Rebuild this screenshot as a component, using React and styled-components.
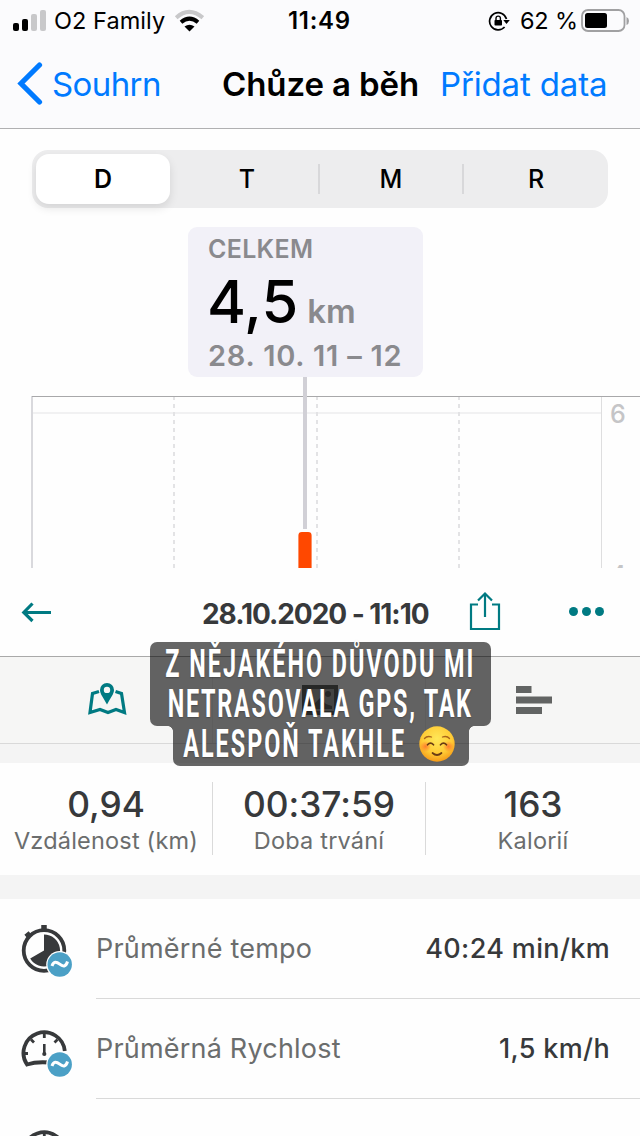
import styled, { createGlobalStyle } from "styled-components";

const stats = [
  { value: "0,94", label: "Vzdálenost (km)" },
  { value: "00:37:59", label: "Doba trvání" },
  { value: "163", label: "Kalorií" },
];

export default function App() {
  return (
    <>
      <GlobalStyle />
      <Screen>
        <HealthHeader>
          <StatusBar>
            <SignalIcon />
            <StatusText $spacing="0.05px">O2 Family</StatusText>
            <WifiIcon />
            <StatusText $bold $spacing="0.7px">
              11:49
            </StatusText>
            <LockIcon />
            <StatusText $spacing="-0.2px">62 %</StatusText>
            <BatteryIcon />
          </StatusBar>
          <NavBar>
            <svg width="52" height="44" viewBox="0 0 52 44">
              <path
                d="M39.5 3 L21 21.5 L39.5 40"
                fill="none"
                stroke="#007aff"
                strokeWidth="5.200"
                strokeLinecap="round"
                strokeLinejoin="miter"
              />
            </svg>
            <NavLink $spacing="-0.6px">Souhrn</NavLink>
            <NavTitle>Chůze a běh</NavTitle>
            <NavLink $spacing="-0.150px">Přidat data</NavLink>
          </NavBar>
        </HealthHeader>

        <HealthBody>
          <Segments>
            <Segment $active>D</Segment>
            <Segment>T</Segment>
            <Segment $divider>M</Segment>
            <Segment $divider>R</Segment>
          </Segments>
          <Summary>
            <SummaryLabel>CELKEM</SummaryLabel>
            <SummaryValue>
              4,5<SummaryUnit>km</SummaryUnit>
            </SummaryValue>
            <SummaryDate>28. 10. 11 – 12</SummaryDate>
          </Summary>
          <Chart />
        </HealthBody>

        <WorkoutHeader>
          <svg width="32" height="22" viewBox="0 0 32 22">
            <path
              d="M30 11.500H3M11.500 2.500L2.800 11.500l8.700 8.500"
              fill="none"
              stroke="#007a82"
              strokeWidth="3.200"
            />
          </svg>
          <WorkoutDate>28.10.2020 - 11:10</WorkoutDate>
          <ShareIcon />
          <Dots>
            <i />
            <i />
            <i />
          </Dots>
        </WorkoutHeader>

        <Tabs>
          <Tab>
            <MapIcon />
          </Tab>
          <Tab>
            <PhotoIcon />
          </Tab>
          <Tab>
            <svg width="38" height="30" viewBox="0 0 38 30">
              <path
                d="M1 1h15.500v7H1zM1 11.500h36v7H1zM1 22h26v7H1z"
                fill="#626463"
              />
            </svg>
          </Tab>
          <Caption>
            <CaptionTop>
              <CaptionLine $spacing="3.3px">Z NĚJAKÉHO DŮVODU MI</CaptionLine>
              <CaptionLine $spacing="2.900px">NETRASOVALA GPS, TAK</CaptionLine>
            </CaptionTop>
            <CaptionBottom>
              <CaptionWord>
                <CaptionLine $spacing="3.300px">ALESPOŇ TAKHLE</CaptionLine>
              </CaptionWord>
              <SmileIcon />
            </CaptionBottom>
          </Caption>
        </Tabs>
        <Band $height={19} />

        <Stats>
          {stats.map((stat) => (
            <Stat key={stat.label}>
              <StatValue>{stat.value}</StatValue>
              <StatLabel>{stat.label}</StatLabel>
            </Stat>
          ))}
        </Stats>
        <Band $height={24} />

        <Row>
          <StopwatchIcon />
          <RowBody>
            <RowLabel>Průměrné tempo</RowLabel>
            <RowValue>40:24 min/km</RowValue>
          </RowBody>
        </Row>
        <Row>
          <GaugeIcon />
          <RowBody>
            <RowLabel>Průměrná Rychlost</RowLabel>
            <RowValue>1,5 km/h</RowValue>
          </RowBody>
        </Row>
        <Row>
          <GaugeIcon />
        </Row>
      </Screen>
    </>
  );
}

function SignalIcon() {
  return (
    <svg width="55" height="40" viewBox="0 0 55 40">
      <rect x="13" y="22" width="6" height="8" rx="2" />
      <rect x="22" y="18" width="6" height="12" rx="2" />
      <rect x="31" y="13" width="6" height="17" rx="2" fill="#c8c8ca" />
      <rect x="40" y="9" width="6" height="21" rx="2" fill="#c8c8ca" />
    </svg>
  );
}

function WifiIcon() {
  return (
    <svg width="30" height="24" viewBox="0 0 30 24">
      <path
        d="M2.200 8.700Q15 -2.800 28.800 8.700"
        fill="none"
        stroke="#c8c8ca"
        strokeWidth="4"
      />
      <path
        d="M7 13.200Q15.500 6 24 13.200"
        fill="none"
        stroke="#000"
        strokeWidth="4"
      />
      <path d="M10.500 17.500Q15.500 14 20.500 17.500L15.500 22.500z" />
    </svg>
  );
}

function LockIcon() {
  return (
    <svg width="22" height="20" viewBox="0 0 22 20">
      <path
        d="M18.500 8A8.600 8.600 0 1 0 16.600 16"
        fill="none"
        stroke="#000"
        strokeWidth="1.700"
      />
      <path d="M15.300 9h6.500l-3.300 4z" />
      <rect x="6.500" y="9" width="7.500" height="5.600" rx="0.800" />
      <path
        d="M8 9V7.300a2.200 2.200 0 0 1 4.400 0V9"
        fill="none"
        stroke="#000"
        strokeWidth="1.400"
      />
    </svg>
  );
}

function BatteryIcon() {
  return (
    <svg width="50" height="24" viewBox="0 0 50 24">
      <rect
        x="1"
        y="1"
        width="42.500"
        height="21"
        rx="6"
        fill="none"
        stroke="#a0a0a2"
        strokeWidth="1.800"
      />
      <rect x="4" y="4" width="22" height="15" rx="2.500" />
      <path d="M45.500 8q2.500 1 2.500 4t-2.500 4z" fill="#a0a0a2" />
    </svg>
  );
}

function Chart() {
  return (
    <ChartSvg width="640" height="191" viewBox="0 377 640 191">
      <path d="M32 413H601" stroke="#f1f1f2" strokeWidth="2" />
      <path
        d="M174 397V568M317 397V568M459 397V568"
        stroke="#e3e3e5"
        strokeWidth="2"
        strokeDasharray="4 4"
        strokeDashoffset="1"
      />
      <path d="M32 396V568" stroke="#d9d9dd" strokeWidth="2" />
      <path d="M601.500 396V568" stroke="#dededf" strokeWidth="1" />
      <path d="M32 396.500H640" stroke="#a8a8aa" strokeWidth="1" />
      <path d="M305 377V529" stroke="#d1d0d6" strokeWidth="4" />
      <path
        d="M298.400 570V535.500a3.500 3.500 0 0 1 3.500-3.500h6.200a3.500 3.500 0 0 1 3.500 3.500V570z"
        fill="#ff4800"
      />
      <ChartLabel x="610" y="423">
        6
      </ChartLabel>
      <ChartLabel x="610" y="583.500">
        4
      </ChartLabel>
    </ChartSvg>
  );
}

function ShareIcon() {
  return (
    <svg width="32" height="44" viewBox="0 0 32 44">
      <path
        d="M9 14.500H2V39h28V14.500H23M16 27V4M9 10.500L16 3.500l7 7"
        fill="none"
        stroke="#007a82"
        strokeWidth="2.200"
      />
    </svg>
  );
}

function MapIcon() {
  return (
    <svg width="40" height="36" viewBox="0 0 40 36">
      <path
        d="M12 9.500L5.500 11.500L3 30.500L13 27.500L21 30.500L29 27.500L37.500 30.500L34.500 11.500L28.500 9.500"
        fill="none"
        stroke="#007a82"
        strokeWidth="3.200"
      />
      <path
        fillRule="evenodd"
        d="M20 1a7 7 0 0 1 7 7c0 4-3.500 8-7 14.500C16.500 16 13 12 13 8a7 7 0 0 1 7-7zM20 4.700a3.200 3.200 0 1 0 0 6.400a3.200 3.200 0 1 0 0-6.400z"
        fill="#007a82"
      />
    </svg>
  );
}

function PhotoIcon() {
  return (
    <svg width="36" height="30" viewBox="0 0 36 30">
      <rect x="4" y="4" width="28" height="22" fill="#a9aaa9" />
      <rect
        x="2"
        y="2"
        width="32"
        height="26"
        fill="none"
        stroke="#626463"
        strokeWidth="4"
      />
      <circle cx="26" cy="9" r="3" fill="#626463" />
      <path d="M6 24V13l7 5 5-5 6 6 6 2v3z" fill="#626463" />
    </svg>
  );
}

function SmileIcon() {
  return (
    <svg width="36" height="36" viewBox="0 0 36 36">
      <defs>
        <radialGradient id="face" cx="0.5" cy="0.35" r="0.65">
          <stop offset="0" stopColor="#ffe758" />
          <stop offset="0.65" stopColor="#ffcb35" />
          <stop offset="1" stopColor="#f59a18" />
        </radialGradient>
        <radialGradient id="cheek">
          <stop offset="0" stopColor="#ff6a2b" stopOpacity="0.8" />
          <stop offset="1" stopColor="#ff6a2b" stopOpacity="0" />
        </radialGradient>
      </defs>
      <circle cx="18" cy="18" r="17.700" fill="url(#face)" />
      <circle cx="6.500" cy="20.500" r="5.500" fill="url(#cheek)" />
      <circle cx="29.500" cy="20.500" r="5.500" fill="url(#cheek)" />
      <path
        d="M8.500 18.800Q11.500 15.500 14.500 18.800M21.500 18.800Q24.500 15.500 27.500 18.800M13.500 27Q18 31 22.500 27"
        fill="none"
        stroke="#6a3c14"
        strokeWidth="1.700"
        strokeLinecap="round"
      />
      <path
        d="M5.500 12.500Q8 9.500 12.500 11M30.500 12.500Q28 9.500 23.500 11"
        fill="none"
        stroke="#a9641a"
        strokeWidth="1.300"
        strokeLinecap="round"
      />
    </svg>
  );
}

function AverageBadge() {
  return (
    <>
      <circle cx="39.700" cy="40.500" r="13.500" fill="#fff" />
      <circle cx="39.700" cy="40.500" r="12.200" fill="#4ba0c6" />
      <path
        d="M32 42C33.500 37 36.500 37.500 39.700 40.200S46 43 47.500 37.500"
        fill="none"
        stroke="#fff"
        strokeWidth="3"
      />
    </>
  );
}

function StopwatchIcon() {
  return (
    <RowIcon width="52" height="54" viewBox="0 0 52 54">
      <circle
        cx="24"
        cy="26.500"
        r="20.300"
        fill="none"
        stroke="#37393b"
        strokeWidth="3.800"
      />
      <path d="M24 10.500A16 16 0 1 1 10.200 34.500L24 26.500z" fill="#37393b" />
      <path d="M24 7V1M9 12L6.500 9" stroke="#37393b" strokeWidth="5.500" />
      <AverageBadge />
    </RowIcon>
  );
}

function GaugeIcon() {
  return (
    <RowIcon width="52" height="54" viewBox="0 0 52 54">
      <path
        d="M44.800 27A20.700 20.700 0 1 0 7 40.500Q16 37.500 29 38.500"
        fill="none"
        stroke="#37393b"
        strokeWidth="3.800"
      />
      <path
        d="M24.300 8v6M11 15.500l3 3M37.500 15.500l-3 3M4 29.500h4"
        stroke="#37393b"
        strokeWidth="2.800"
      />
      <path d="M24.300 20V31" stroke="#37393b" strokeWidth="2.600" />
      <circle cx="24.300" cy="30" r="2.100" fill="#37393b" />
      <AverageBadge />
    </RowIcon>
  );
}

const GlobalStyle = createGlobalStyle`
  * {
    box-sizing: border-box;
  }

  body {
    margin: 0;
    background-color: #fff;
    font-family: Inter, "Liberation Sans", sans-serif;
    font-feature-settings: "calt" 0;
  }

  svg {
    display: block;
  }
`;

const Screen = styled.div`
  width: 640px;
  height: 1136px;
  overflow: hidden;
  background-color: #fefefe;
`;

const HealthHeader = styled.header`
  height: 129px;
  background-color: #fbfbfd;
  border-bottom: 1px solid #b0b0b2;
`;

const StatusBar = styled.div`
  height: 40px;
  display: grid;
  grid-template-columns: 54px 120px 114px 200px 32px 61px 1fr;
  align-items: center;
`;

const StatusText = styled.span`
  font-size: ${({ $bold }) => ($bold ? "24px" : "23.5px")};
  line-height: 40px;
  font-weight: ${({ $bold }) => ($bold ? 600 : 400)};
  letter-spacing: ${({ $spacing }) => $spacing};
  white-space: nowrap;
  padding-top: 1px;
`;

const NavBar = styled.div`
  height: 88px;
  display: grid;
  grid-template-columns: 52px 170px 218px 1fr;
  align-items: center;
`;

const NavLink = styled.span`
  font-size: 33px;
  line-height: 44px;
  letter-spacing: ${({ $spacing }) => $spacing};
  color: #007aff;
  white-space: nowrap;
`;

const NavTitle = styled.span`
  font-size: 33px;
  line-height: 44px;
  font-weight: 600;
  letter-spacing: -0.1px;
  color: #000;
  white-space: nowrap;
`;

const HealthBody = styled.section`
  height: 439px;
  padding-top: 21px;
  display: flex;
  flex-direction: column;
  overflow: hidden;
`;

const Segments = styled.div`
  height: 58px;
  margin: 0 32px;
  padding: 4px 0 4px 4px;
  flex-shrink: 0;
  display: grid;
  grid-template-columns: 134px 148px 144px 1fr;
  border-radius: 16px;
  background-color: #ededee;
`;

const Segment = styled.div`
  position: relative;
  padding-left: ${({ $active, $divider }) =>
    $active ? "0" : $divider ? "2px" : "6px"};
  display: flex;
  align-items: center;
  justify-content: center;
  border-radius: 13px;
  font-size: 25px;
  font-weight: ${({ $active }) => ($active ? 600 : 450)};
  background-color: ${({ $active }) => ($active ? "#fff" : "transparent")};
  box-shadow: ${({ $active }) =>
    $active ? "0 4px 10px rgba(0, 0, 0, 0.11)" : "none"};

  &::before {
    content: "";
    display: ${({ $divider }) => ($divider ? "block" : "none")};
    position: absolute;
    left: 0;
    top: 10px;
    width: 2px;
    height: 30px;
    background-color: #d8d8da;
  }
`;

const Summary = styled.div`
  width: 235px;
  height: 150px;
  margin: 19px 0 0 188px;
  padding: 6px 0 0 20px;
  flex-shrink: 0;
  border-radius: 9px;
  background-color: #f2f1f8;
  color: #8a8a8e;
  white-space: nowrap;
`;

const SummaryLabel = styled.div`
  font-size: 25px;
  font-weight: 600;
  line-height: 33px;
  letter-spacing: 0.3px;
`;

const SummaryValue = styled.div`
  height: 70px;
  margin-left: -1px;
  font-size: 59.5px;
  font-weight: 500;
  line-height: 70px;
  color: #000;
`;

const SummaryUnit = styled.span`
  margin-left: 9px;
  font-size: 33px;
  font-weight: 600;
  color: #8a8a8e;
`;

const SummaryDate = styled.div`
  font-size: 29px;
  font-weight: 600;
  line-height: 40px;
  letter-spacing: 0.8px;
`;

const ChartSvg = styled.svg`
  flex-shrink: 0;
`;

const ChartLabel = styled.text`
  font-size: 25px;
  font-weight: 450;
  fill: #c5c5c7;
`;

const WorkoutHeader = styled.header`
  height: 89px;
  padding-left: 21px;
  display: grid;
  grid-template-columns: 181px 267px 100px 1fr;
  align-items: center;
  border-bottom: 1px solid #a9a9a9;
`;

const WorkoutDate = styled.span`
  font-size: 28px;
  font-weight: 700;
  letter-spacing: -1.05px;
  padding-top: 3px;
  color: #37393b;
  white-space: nowrap;
`;

const Dots = styled.div`
  padding-bottom: 2px;
  display: flex;
  gap: 4px;

  i {
    width: 9px;
    height: 9px;
    border-radius: 50%;
    background-color: #007a82;
  }
`;

const Tabs = styled.div`
  position: relative;
  height: 87px;
  display: grid;
  grid-template-columns: 212px 213px 1fr;
  background-color: #f6f6f5;
  border-bottom: 1px solid #d9d9d9;
`;

const Tab = styled.div`
  padding-left: 2px;
  display: flex;
  align-items: center;
  justify-content: center;

  & + & {
    border-left: 1px solid #e9e9e8;
  }
`;

const Caption = styled.div`
  position: absolute;
  top: -15px;
  left: 150px;
  width: 341px;
  display: flex;
  flex-direction: column;
  align-items: center;
  color: #fff;
`;

const CaptionTop = styled.div`
  width: 341px;
  height: 84px;
  padding-top: 2px;
  display: flex;
  flex-direction: column;
  align-items: center;
  border-radius: 7px;
  background-color: rgba(0, 0, 0, 0.6);
`;

const CaptionBottom = styled.div`
  position: relative;
  width: 296px;
  height: 40px;
  padding: 0 0 5px 8px;
  display: flex;
  align-items: center;
  border-radius: 0 0 7px 7px;
  background-color: rgba(0, 0, 0, 0.6);

  /* inner corners where the two blocks join */
  &::before,
  &::after {
    content: "";
    position: absolute;
    top: 0;
    width: 5px;
    height: 5px;
  }

  &::before {
    left: -5px;
    background: radial-gradient(
      circle at 0 100%,
      transparent 4.5px,
      rgba(0, 0, 0, 0.6) 5px
    );
  }

  &::after {
    right: -5px;
    background: radial-gradient(
      circle at 100% 100%,
      transparent 4.5px,
      rgba(0, 0, 0, 0.6) 5px
    );
  }
`;

const CaptionWord = styled.div`
  width: 238px;
  padding-right: 10px;
  display: flex;
  justify-content: center;
`;

const CaptionLine = styled.div`
  font-family: Roboto, "Liberation Sans", sans-serif;
  font-size: 39px;
  font-weight: 700;
  line-height: 40px;
  letter-spacing: ${({ $spacing }) => $spacing};
  white-space: nowrap;
  transform: scaleX(0.6);
  text-shadow: 0 1px 2px rgba(0, 0, 0, 0.25);
`;

const Band = styled.div`
  height: ${({ $height }) => $height}px;
  background-color: #f4f4f4;
`;

const Stats = styled.div`
  height: 112px;
  padding: 19px 0 20px;
  display: grid;
  grid-template-columns: 212px 213px 1fr;
`;

const Stat = styled.div`
  display: flex;
  flex-direction: column;
  align-items: center;
  white-space: nowrap;

  & + & {
    border-left: 1px solid #dadada;
  }
`;

const StatValue = styled.div`
  font-size: 35.3px;
  font-weight: 500;
  line-height: 45px;
  color: #37393b;
`;

const StatLabel = styled.div`
  font-size: 23.5px;
  line-height: 28px;
  letter-spacing: 0.2px;
  color: #6b6d6d;
`;

const Row = styled.div`
  height: 100px;
  display: flex;
`;

const RowIcon = styled.svg`
  margin: 25px 24px 0 20px;
  flex-shrink: 0;
`;

const RowBody = styled.div`
  flex: 1;
  padding-right: 30px;
  display: flex;
  align-items: center;
  justify-content: space-between;
  border-bottom: 1px solid #d9d9d9;
  font-size: 27px;
  letter-spacing: 0.2px;
  white-space: nowrap;
`;

const RowLabel = styled.span`
  color: #6b6d6d;
`;

const RowValue = styled.span`
  font-weight: 500;
  letter-spacing: 0.35px;
  color: #37393b;
`;
